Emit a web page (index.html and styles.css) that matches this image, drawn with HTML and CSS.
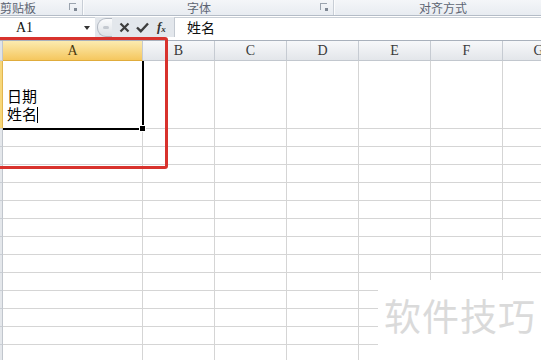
FILE: index.html
```html
<!DOCTYPE html>
<html>
<head>
<meta charset="utf-8">
<link rel="stylesheet" href="styles.css">
</head>
<body>
  <div class="ribbon">
    <div class="group g-clip"><span class="label">剪贴板</span><span class="launcher"></span></div>
    <div class="group g-font"><span class="label">字体</span><span class="launcher"></span></div>
    <div class="group g-align"><span class="label">对齐方式</span></div>
  </div>

  <div class="formula-bar">
    <div class="name-box"><span class="ref">A1</span><span class="drop"></span></div>
    <div class="fx-tools">
      <span class="knob"><span></span></span>
      <svg class="tool" width="11" height="11" viewBox="0 0 11 11"><path d="M1.5 1.5 L9.5 9.5 M9.5 1.5 L1.5 9.5" stroke="#3d3d3d" stroke-width="2.2" fill="none"/></svg>
      <svg class="tool" width="13" height="11" viewBox="0 0 13 11"><path d="M1 5.5 L4.8 9.2 L12 1.5" stroke="#3d3d3d" stroke-width="2.4" fill="none"/></svg>
      <span class="fx">f<sub>x</sub></span>
    </div>
    <div class="formula-input">姓名</div>
  </div>

  <div class="sheet">
    <div class="row head">
      <div class="rh"></div><div class="c a sel">A</div><div class="c">B</div><div class="c">C</div><div class="c">D</div><div class="c">E</div><div class="c">F</div><div class="c">G</div>
    </div>
    <div class="row first">
      <div class="rh sel"></div>
      <div class="c a active">
        <div class="cell-text">
          <div class="line">日期</div>
          <div class="line">姓名<span class="caret"></span></div>
        </div>
        <div class="selection"><span class="handle"></span></div>
      </div>
      <div class="c"></div><div class="c"></div><div class="c"></div><div class="c"></div><div class="c"></div><div class="c"></div>
    </div>
    <div class="row"><div class="rh"></div><div class="c a"></div><div class="c"></div><div class="c"></div><div class="c"></div><div class="c"></div><div class="c"></div><div class="c"></div></div>
    <div class="row"><div class="rh"></div><div class="c a"></div><div class="c"></div><div class="c"></div><div class="c"></div><div class="c"></div><div class="c"></div><div class="c"></div></div>
    <div class="row"><div class="rh"></div><div class="c a"></div><div class="c"></div><div class="c"></div><div class="c"></div><div class="c"></div><div class="c"></div><div class="c"></div></div>
    <div class="row"><div class="rh"></div><div class="c a"></div><div class="c"></div><div class="c"></div><div class="c"></div><div class="c"></div><div class="c"></div><div class="c"></div></div>
    <div class="row"><div class="rh"></div><div class="c a"></div><div class="c"></div><div class="c"></div><div class="c"></div><div class="c"></div><div class="c"></div><div class="c"></div></div>
    <div class="row"><div class="rh"></div><div class="c a"></div><div class="c"></div><div class="c"></div><div class="c"></div><div class="c"></div><div class="c"></div><div class="c"></div></div>
    <div class="row"><div class="rh"></div><div class="c a"></div><div class="c"></div><div class="c"></div><div class="c"></div><div class="c"></div><div class="c"></div><div class="c"></div></div>
    <div class="row"><div class="rh"></div><div class="c a"></div><div class="c"></div><div class="c"></div><div class="c"></div><div class="c"></div><div class="c"></div><div class="c"></div></div>
    <div class="row"><div class="rh"></div><div class="c a"></div><div class="c"></div><div class="c"></div><div class="c"></div><div class="c"></div><div class="c"></div><div class="c"></div></div>
    <div class="row"><div class="rh"></div><div class="c a"></div><div class="c"></div><div class="c"></div><div class="c"></div><div class="c"></div><div class="c"></div><div class="c"></div></div>
    <div class="row"><div class="rh"></div><div class="c a"></div><div class="c"></div><div class="c"></div><div class="c"></div><div class="c"></div><div class="c"></div><div class="c"></div></div>
    <div class="row"><div class="rh"></div><div class="c a"></div><div class="c"></div><div class="c"></div><div class="c"></div><div class="c"></div><div class="c"></div><div class="c"></div></div>
    <div class="row"><div class="rh"></div><div class="c a"></div><div class="c"></div><div class="c"></div><div class="c"></div><div class="c"></div><div class="c"></div><div class="c"></div></div>
  </div>

  <!-- annotation box drawn over the sheet -->
  <div class="red-mark"></div>
  <div class="watermark">软件技巧</div>
</body>
</html>
```

FILE: styles.css
```css
/* excel 2010 look, cropped */
body {
  margin: 0;
  width: 541px;
  height: 360px;
  overflow: hidden;
  position: relative;
  background: #fff;
  font-family: "Noto Sans CJK SC", "Noto Sans", sans-serif;
}

.ribbon {
  display: flex;
  height: 15px;
  line-height: 15px;
  font-size: 12px;
  color: #5d6573;
  background: linear-gradient(#f4f6f9, #e8ecf1);
  border-bottom: 1px solid #b4bcc7;
}
.group {
  position: relative;
  border-right: 1px solid #c8ced6;
  box-shadow: 1px 0 0 #fbfcfd;
  white-space: nowrap;
}
.g-clip { width: 82px; }
.g-font { width: 251px; padding-left: 104px; box-sizing: border-box; }
.g-align { flex: 1; padding-left: 85px; border-right: none; box-shadow: none; }
.launcher {
  position: absolute;
  right: 6px;
  top: 3px;
  width: 6px;
  height: 6px;
  border-top: 1px solid #9aa3ae;
  border-left: 1px solid #9aa3ae;
}
.launcher::after {
  content: "";
  position: absolute;
  right: -1px;
  bottom: -1px;
  width: 3px;
  height: 3px;
  background: #7f8894;
}

.formula-bar {
  display: flex;
  height: 20px;
  margin-top: 1px;
  background: #e3e7ec;
}
.name-box {
  width: 95px;
  display: flex;
  align-items: center;
  justify-content: space-between;
  background: #fff;
  border-top: 1px solid #c9cfd6;
  padding: 0 5px 0 16px;
  box-sizing: border-box;
}
.ref {
  font-family: "Liberation Serif", serif;
  font-size: 14px;
  color: #111;
}
.drop {
  width: 0;
  height: 0;
  border-left: 3px solid transparent;
  border-right: 3px solid transparent;
  border-top: 4px solid #333;
}
.fx-tools {
  width: 79px;
  display: flex;
  align-items: center;
  padding-left: 2px;
  box-sizing: border-box;
}
.knob {
  width: 14px;
  height: 17px;
  border: 1px solid #b3b9c2;
  border-right: none;
  border-radius: 9px 0 0 9px;
  background: linear-gradient(#fafbfc, #dde1e6);
  display: flex;
  align-items: center;
  justify-content: center;
  margin-right: 7px;
}
.knob span {
  width: 6px;
  height: 3px;
  border-radius: 2px;
  background: #c4c9d0;
  margin-left: 2px;
}
.tool { margin-right: 6px; }
.fx {
  font-family: "Liberation Serif", serif;
  font-style: italic;
  font-weight: bold;
  font-size: 13px;
  color: #333;
  margin-left: 2px;
}
.fx sub { font-size: 9px; vertical-align: -1px; }
.formula-input {
  flex: 1;
  background: #fff;
  border-left: 1px solid #c3c9d1;
  border-top: 1px solid #c9cfd6;
  padding-left: 12px;
  font-size: 14px;
  line-height: 19px;
  color: #111;
}

.sheet {
  margin-top: 3px;
  border-top: 1px solid #a9b1bc;
}
.row {
  display: flex;
  height: 18px;
}
.row.first { height: 68px; }
.rh {
  width: 3px;
  flex: none;
  background: #e4e7eb;
  border-right: 1px solid #c1c6cd;
  border-bottom: 1px solid #c9ced4;
  box-sizing: border-box;
}
.rh.sel { background: #f7d77a; border-right-color: #e2b650; }
.c {
  width: 72px;
  flex: none;
  box-sizing: border-box;
  border-right: 1px solid #d5d5d5;
  border-bottom: 1px solid #d5d5d5;
}
.c.a { width: 140px; }

.head { height: 20px; }
.head .c {
  background: linear-gradient(#f7f8fa, #e3e6ea);
  border-right: 1px solid #c6cbd2;
  border-bottom: 1px solid #c2c7ce;
  text-align: center;
  font-family: "Liberation Serif", serif;
  font-size: 14px;
  line-height: 19px;
  color: #3a3a3a;
}
.head .rh { background: #dfe3e8; }
.head .c.sel {
  background: linear-gradient(#fcebb0, #f5c75e);
  border-bottom-color: #e0ac3c;
  color: #4a3a10;
}

.active {
  position: relative;
  display: flex;
  align-items: flex-end;
}
.cell-text {
  padding: 0 0 5px 4px;
  font-size: 15px;
  color: #000;
}
.line {
  height: 18px;
  line-height: 18px;
}
.caret {
  display: inline-block;
  width: 1px;
  height: 16px;
  background: #000;
  vertical-align: -3px;
}
.selection {
  position: absolute;
  left: 0;
  top: 0;
  right: -2px;
  bottom: -2px;
  border-right: 2px solid #000;
  border-bottom: 2px solid #000;
}
.handle {
  position: absolute;
  right: -4px;
  bottom: -4px;
  width: 5px;
  height: 5px;
  background: #000;
  border: 1px solid #fff;
}

.red-mark {
  position: absolute;
  left: -10px;
  top: 37px;
  width: 178px;
  height: 132px;
  box-sizing: border-box;
  border: 3px solid #d8322d;
  border-radius: 3px;
}
.watermark {
  position: absolute;
  left: 378px;
  top: 280px;
  right: 0;
  bottom: 0;
  background: #fff;
  padding: 13px 0 0 6px;
  font-size: 37px;
  line-height: 44px;
  letter-spacing: 1px;
  color: #dadada;
  white-space: nowrap;
}
```
